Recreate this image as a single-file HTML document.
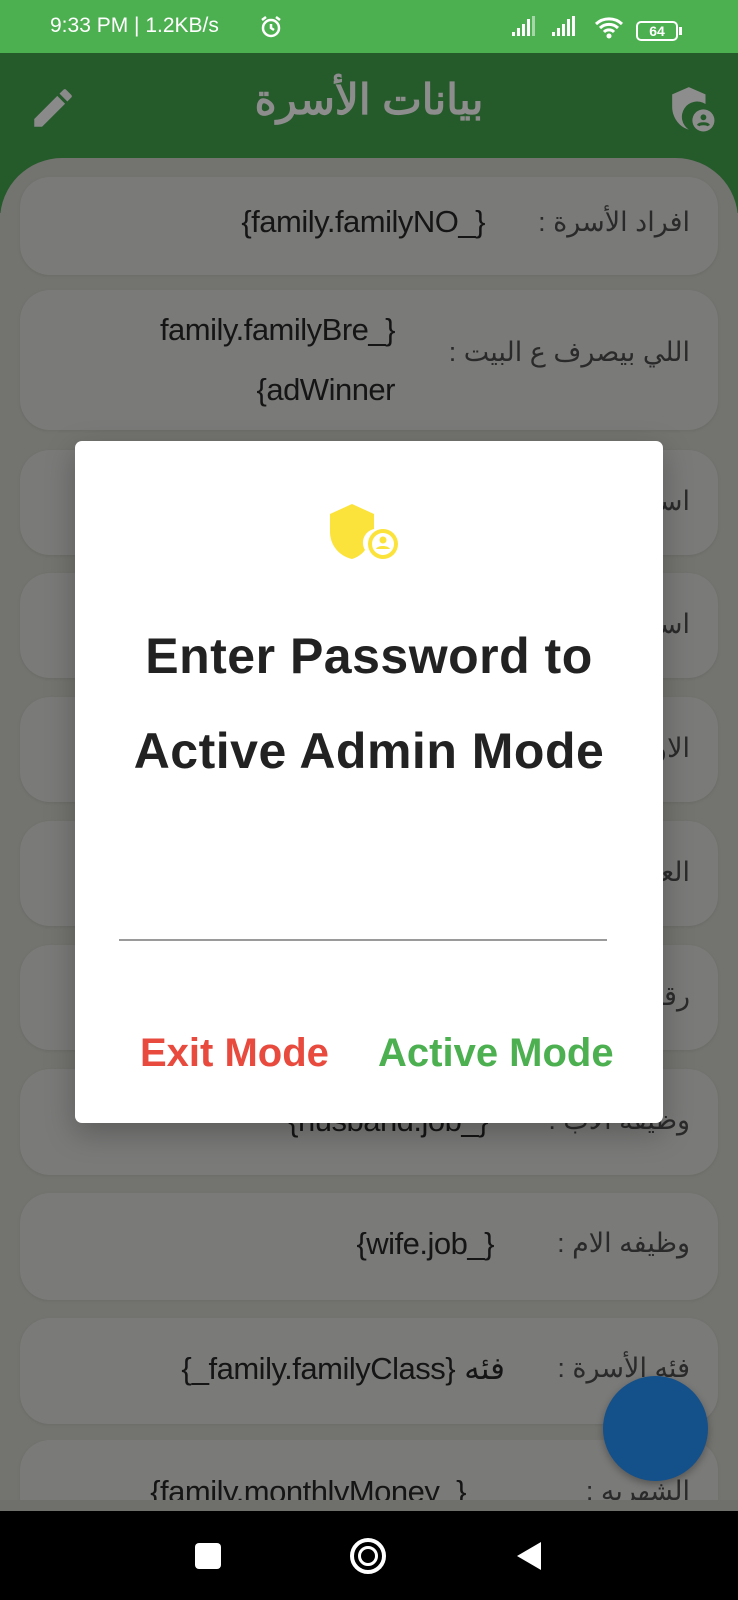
<!DOCTYPE html>
<html><head><meta charset="utf-8">
<style>
*{margin:0;padding:0;box-sizing:border-box}
body{width:738px;height:1600px;overflow:hidden;background:#737370;position:relative;font-family:"Liberation Sans","Noto Sans CJK SC",sans-serif}
.sb{position:absolute;left:0;top:0;width:738px;height:53px;background:#4caf50;color:#fff;font-size:21px}
.ab{position:absolute;left:0;top:53px;width:738px;height:160px;background:#255a2a}
.panel{position:absolute;left:0;top:158px;width:738px;height:1360px;background:#73736f;border-radius:62px 62px 0 0}
.card{position:absolute;left:20px;width:698px;background:#7a7a79;border-radius:30px;box-shadow:0 1px 3px rgba(0,0,0,.08)}
.lab{position:absolute;right:28px;font-size:27px;color:#2a2a2a;direction:rtl;white-space:nowrap;font-family:"Liberation Sans","Noto Sans CJK SC",sans-serif}
.val{position:absolute;font-size:31px;color:#151515;white-space:nowrap;text-align:right;letter-spacing:-0.5px}
.dlg{position:absolute;left:75px;top:441px;width:588px;height:682px;background:#fff;border-radius:7px;box-shadow:0 10px 30px rgba(0,0,0,.25)}
.t{position:absolute;left:0;width:588px;text-align:center;font-size:50px;color:#222;font-weight:bold;letter-spacing:0.5px}
.nav{position:absolute;left:0;top:1511px;width:738px;height:89px;background:#000}
</style></head><body>
<div class="sb">
<span style="position:absolute;left:50px;top:14px">9:33 PM | 1.2KB/s</span>
<svg style="position:absolute;left:258px;top:14px" width="26" height="26" viewBox="0 0 26 26"><circle cx="13" cy="14" r="8" fill="none" stroke="#fff" stroke-width="2.5"/><path d="M13 10v4l3 2M4 6l4-3M22 6l-4-3" stroke="#fff" stroke-width="2.5" fill="none"/></svg>
<svg style="position:absolute;left:510px;top:16px" width="70" height="22" viewBox="0 0 70 22"><g fill="#fff"><rect x="2" y="16" width="3" height="4"/><rect x="7" y="12" width="3" height="8"/><rect x="12" y="8" width="3" height="12"/><rect x="17" y="3" width="3" height="17"/><rect x="22" y="0" width="3" height="20" opacity=".5"/><rect x="42" y="16" width="3" height="4"/><rect x="47" y="12" width="3" height="8"/><rect x="52" y="8" width="3" height="12"/><rect x="57" y="3" width="3" height="17"/><rect x="62" y="0" width="3" height="20"/></g></svg>
<svg style="position:absolute;left:594px;top:16px" width="30" height="24" viewBox="0 0 30 24"><path d="M2 8a19 19 0 0 1 26 0M6 12a13 13 0 0 1 18 0M10 16a7 7 0 0 1 10 0" stroke="#fff" stroke-width="3" fill="none"/><circle cx="15" cy="20" r="2.5" fill="#fff"/></svg>
<div style="position:absolute;left:636px;top:21px;width:42px;height:20px;border:2px solid #fff;border-radius:5px;font-size:14px;text-align:center;line-height:16px;font-weight:bold">64</div>
<div style="position:absolute;left:679px;top:27px;width:3px;height:8px;background:#fff"></div>
</div>
<div class="ab">
<svg style="position:absolute;left:28px;top:30px" width="50" height="50" viewBox="0 0 24 24"><path d="M3 17.25V21h3.75L17.81 9.94l-3.75-3.75L3 17.25zM20.71 7.04a1 1 0 0 0 0-1.41l-2.34-2.34a1 1 0 0 0-1.41 0l-1.83 1.83 3.75 3.75 1.83-1.83z" fill="#8a8a8a"/></svg>
<div style="position:absolute;left:0;width:738px;top:22px;text-align:center;font-size:42px;font-weight:bold;color:#8d8d8d;direction:rtl">بيانات الأسرة</div>
<svg style="position:absolute;left:668px;top:32px" width="50" height="50" viewBox="0 0 24 24"><path d="M10 1L2 4.5v6c0 5 3.4 9.7 8 10.9A7 7 0 0 1 18 9.1V4.5z" fill="#8d8d8d"/><circle cx="17" cy="17" r="5.3" fill="#8d8d8d"/><circle cx="17" cy="15.5" r="1.4" fill="#255a2a"/><path d="M14.5 19.5c.6-1.2 4.4-1.2 5 0" stroke="#255a2a" stroke-width="1.4" fill="none"/></svg>
</div>
<div class="panel"></div>

<div class="card" style="top:177px;height:98px"><span class="lab" style="top:30px">افراد الأسرة :</span><span class="val" style="right:233px;top:27px">{family.familyNO_}</span></div>
<div class="card" style="top:290px;height:140px"><span class="lab" style="top:47px">اللي بيصرف ع البيت :</span><span class="val" style="right:323px;top:22px">family.familyBre_}</span><span class="val" style="right:323px;top:82px">{adWinner</span></div>
<div class="card" style="top:450px;height:105px"><span class="lab" style="top:36px">اسم الاب :</span></div>
<div class="card" style="top:573px;height:105px"><span class="lab" style="top:36px">اسم الام :</span></div>
<div class="card" style="top:697px;height:105px"><span class="lab" style="top:36px">الاولاد :</span></div>
<div class="card" style="top:821px;height:105px"><span class="lab" style="top:36px">العنوان :</span></div>
<div class="card" style="top:945px;height:105px"><span class="lab" style="top:36px">رقم التليفون :</span></div>
<div class="card" style="top:1069px;height:106px"><span class="lab" style="top:36px">وظيفه الاب :</span><span class="val" style="right:230px;top:34px">{husband.job_}</span></div>
<div class="card" style="top:1193px;height:107px"><span class="lab" style="top:35px">وظيفه الام :</span><span class="val" style="right:224px;top:33px">{wife.job_}</span></div>
<div class="card" style="top:1318px;height:106px"><span class="lab" style="top:35px">فئه الأسرة :</span><span class="val" style="right:213px;top:33px;direction:rtl">فئه {family.familyClass_}</span></div>
<div style="position:absolute;left:0;top:1440px;width:738px;height:60px;overflow:hidden">
<div class="card" style="top:0;height:106px"><span class="lab" style="top:36px">الشهريه :</span><span class="val" style="right:252px;top:34px">{family.monthlyMoney_}</span></div>
</div>
<div style="position:absolute;left:0;top:1500px;width:738px;height:11px;background:#6f6f6c"></div>

<div style="position:absolute;left:603px;top:1376px;width:105px;height:105px;border-radius:50%;background:#14508a;box-shadow:0 3px 8px rgba(0,0,0,.3)"></div>

<div class="dlg">
<svg style="position:absolute;left:255px;top:58px" width="72" height="62" viewBox="0 0 72 62"><path d="M22 5L0 15v18c0 13 9 24 22 27 6-2 10-5 13-9A14 14 0 0 1 44 30V15z" fill="#fbe33b"/><circle cx="53" cy="45" r="15" fill="#fbe33b"/><circle cx="53" cy="45" r="11" fill="#fff"/><circle cx="53" cy="41" r="3.5" fill="#fbe33b"/><path d="M46 50c2-4 12-4 14 0z" fill="#fbe33b"/></svg>
<div class="t" style="top:186px">Enter Password to</div>
<div class="t" style="top:281px">Active Admin Mode</div>
<div style="position:absolute;left:44px;top:498px;width:488px;height:2px;background:#9a9a9a"></div>
<div style="position:absolute;left:65px;top:590px;font-size:40px;font-weight:bold;color:#e84a3e">Exit Mode</div>
<div style="position:absolute;left:303px;top:590px;font-size:40px;font-weight:bold;color:#4caf50">Active Mode</div>
</div>

<div class="nav">
<div style="position:absolute;left:195px;top:32px;width:26px;height:26px;background:#fff;border-radius:4px"></div>
<div style="position:absolute;left:350px;top:27px;width:36px;height:36px;border:4px solid #fff;border-radius:50%"><div style="position:absolute;left:4px;top:4px;width:20px;height:20px;border:3px solid #fff;border-radius:50%"></div></div>
<svg style="position:absolute;left:515px;top:29px" width="28" height="32" viewBox="0 0 28 32"><path d="M26 2L2 16l24 14z" fill="#fff"/></svg>
</div>
</body></html>
